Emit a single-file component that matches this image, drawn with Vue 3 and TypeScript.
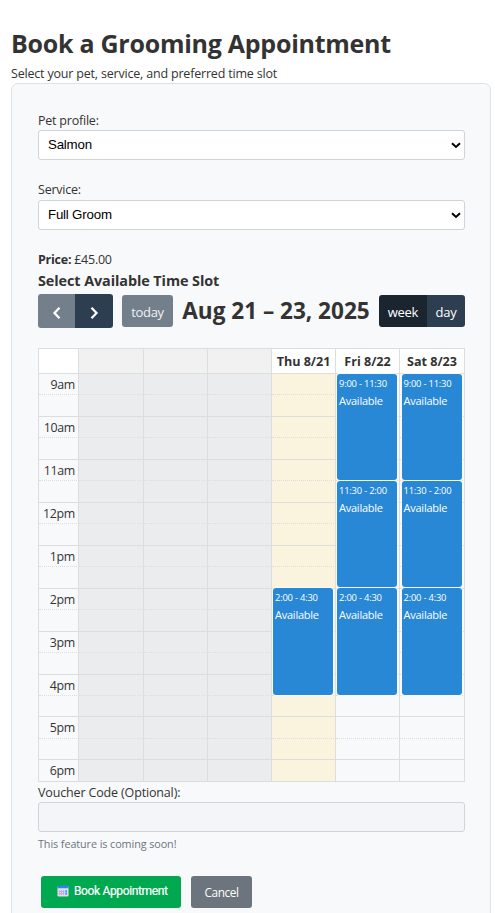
<script setup lang="ts">
import { ref } from 'vue'

interface Slot { time: string; start: number }
interface Day { label: string; kind: 'past' | 'today' | 'open'; slots: Slot[] }

const pet = ref('Salmon')
const service = ref('Full Groom')
const view = ref<'week' | 'day'>('week')

const morning: Slot = { time: '9:00 - 11:30', start: 0 }
const midday: Slot = { time: '11:30 - 2:00', start: 5 }
const afternoon: Slot = { time: '2:00 - 4:30', start: 10 }

const days: Day[] = [
  { label: '', kind: 'past', slots: [] },
  { label: '', kind: 'past', slots: [] },
  { label: '', kind: 'past', slots: [] },
  { label: 'Thu 8/21', kind: 'today', slots: [afternoon] },
  { label: 'Fri 8/22', kind: 'open', slots: [morning, midday, afternoon] },
  { label: 'Sat 8/23', kind: 'open', slots: [morning, midday, afternoon] },
]

const hours = ['9am', '10am', '11am', '12pm', '1pm', '2pm', '3pm', '4pm', '5pm', '6pm']
const rows = hours.flatMap((h) => (h === '6pm' ? [h] : [h, '']))
</script>

<template>
  <main class="page">
    <h1>Book a Grooming Appointment</h1>
    <p class="subtitle">Select your pet, service, and preferred time slot</p>
    <form class="card" @submit.prevent>
      <label class="lbl pet-lbl" for="pet">Pet profile:</label>
      <div class="select-wrap">
        <select id="pet" v-model="pet" class="field"><option>Salmon</option></select>
        <svg class="caret" viewBox="0 0 10 7"><path d="M1 1.200 5 4.900 9 1.200" /></svg>
      </div>
      <label class="lbl service-lbl" for="service">Service:</label>
      <div class="select-wrap">
        <select id="service" v-model="service" class="field"><option>Full Groom</option></select>
        <svg class="caret" viewBox="0 0 10 7"><path d="M1 1.200 5 4.900 9 1.200" /></svg>
      </div>
      <p class="price"><strong>Price:</strong> £45.00</p>
      <h3>Select Available Time Slot</h3>

      <div class="toolbar">
        <div class="left">
          <div class="group arrows">
            <button type="button" class="muted" disabled aria-label="Previous">
              <svg viewBox="0 0 10 14"><path d="M7.500 1.800 2.500 7l5 5.200" /></svg>
            </button>
            <button type="button" aria-label="Next">
              <svg viewBox="0 0 10 14"><path d="m2.500 1.800 5 5.200-5 5.200" /></svg>
            </button>
          </div>
          <div class="group today-btn"><button type="button" class="muted" disabled>today</button></div>
        </div>
        <h2>Aug 21 – 23, 2025</h2>
        <div class="group views">
          <button type="button" :class="{ active: view === 'week' }" @click="view = 'week'">week</button>
          <button type="button" :class="{ active: view === 'day' }" @click="view = 'day'">day</button>
        </div>
      </div>

      <div class="calendar">
        <div class="cols head">
          <div class="cell"></div>
          <div v-for="(d, i) in days" :key="i" class="cell" :class="d.kind"><span>{{ d.label }}</span></div>
        </div>
        <div class="body">
          <div v-for="(r, i) in rows" :key="i" class="cols row" :class="{ minor: !r }">
            <div class="cell axis">{{ r }}</div>
            <div v-for="(d, j) in days" :key="j" class="cell" :class="d.kind"></div>
          </div>
          <div class="cols events">
            <div></div>
            <div v-for="(d, i) in days" :key="i" class="lane">
              <div
                v-for="s in d.slots"
                :key="s.start"
                class="event"
                :style="{ top: `${(s.start / 19) * 100}%` }"
              >
                <div class="time">{{ s.time }}</div>
                <div class="title">Available</div>
              </div>
            </div>
          </div>
        </div>
      </div>

      <label class="lbl voucher-lbl" for="voucher">Voucher Code (Optional):</label>
      <input id="voucher" class="field voucher" disabled />
      <p class="hint">This feature is coming soon!</p>
      <div class="actions">
        <button type="submit" class="book">
          <svg class="cal" viewBox="0 0 13 13">
            <rect x="0.5" y="1" width="12" height="11.5" rx="1.5" fill="#e4dcef" />
            <path d="M.5 3.500V2.200Q.5.7 2 .7h9Q12.500.7 12.500 2.200V3.500z" fill="#2c86ec" />
            <path d="M2.500 5.500v5.500M4.800 5.500v5.500M7.100 5.500v5.500M2 7h6M2 9.300h6" stroke="#b9a9cd" stroke-width=".9" />
            <path d="M9.900 5.300v5.500" stroke="#3d9df5" stroke-width="1.600" />
          </svg>
          <span>Book Appointment</span>
        </button>
        <button type="button" class="cancel">Cancel</button>
      </div>
    </form>
  </main>
</template>

<style>
html, body { background: #fff; overflow: hidden; }
</style>

<style scoped>
* { box-sizing: border-box; }
.page {
  width: 495px;
  height: 913px;
  overflow: hidden;
  padding: 27px 4px 0 11px;
  font: 12.8px/20px "Open Sans", "Noto Sans", sans-serif;
  color: #333;
}
h1, h2, h3, p { margin: 0; white-space: nowrap; }
h1 { font-size: 25px; line-height: 32px; height: 37px; font-weight: 700; letter-spacing: -0.26px; }
.subtitle { height: 19px; font-size: 12.5px; letter-spacing: -0.19px; }
.card {
  width: 480px;
  height: 860px;
  padding: 27px 25px 0 26px;
  background: #f8f9fb;
  border: 1px solid #dee2e6;
  border-radius: 7px;
}
.lbl { display: block; height: 20px; font-size: 12.5px; letter-spacing: -0.22px; white-space: nowrap; }
.pet-lbl { height: 19px; line-height: 19px; }
.service-lbl { margin-top: 20px; }
.select-wrap { position: relative; width: 427px; height: 30px; }
.field {
  display: block;
  width: 427px;
  height: 30px;
  appearance: none;
  margin: 0;
  padding: 0 9px 1px;
  border: 1px solid #ced4da;
  border-radius: 3px;
  background: #fff;
  color: #000;
  font: 13.3px "Liberation Sans", sans-serif;
  letter-spacing: -0.2px;
}
.caret { position: absolute; right: 4px; top: 12px; width: 10px; height: 7px; fill: none; stroke: #000; stroke-width: 2; }
.price { margin-top: 20px; height: 20px; font-size: 12.5px; letter-spacing: -0.25px; }
h3 { font-size: 14.4px; line-height: 22px; height: 24px; font-weight: 700; letter-spacing: -0.08px; }
.toolbar { display: flex; justify-content: space-between; align-items: center; width: 427px; height: 34px; }
.left { display: flex; align-items: center; gap: 9px; }
.group { display: flex; height: 32px; border-radius: 3px; overflow: hidden; }
.group button {
  display: flex;
  align-items: center;
  justify-content: center;
  height: 100%;
  padding: 2px 0 0;
  border: 0;
  background: #2c3e50;
  color: #fff;
  font: 13px "Open Sans", sans-serif;
  letter-spacing: -0.3px;
}
.group button.muted { background: #737f8b; color: #f0f2f3; }
.group button.active { background: #1a252f; }
.group.arrows { height: 34px; }
.arrows button { width: 38px; }
.arrows button:first-child { width: 37px; }
.arrows svg { width: 10px; height: 14px; margin-top: 2px; fill: none; stroke: #fff; stroke-width: 2.3; }
.today-btn button { width: 51px; }
.views button:first-child { width: 48px; }
.views button:last-child { width: 38px; }
h2 { font-size: 22.6px; line-height: 34px; height: 34px; font-weight: 700; letter-spacing: -0.02px; }
.calendar { width: 427px; margin-top: 20px; border: 1px solid #ddd; border-right: 0; }
.cols { display: grid; grid-template-columns: 40px 65px 64px 64px 64px 64px 65px; }
.cell { border-right: 1px solid #ddd; }
.head { height: 24px; background: #fff; }
.head .cell { display: flex; justify-content: center; font-size: 12.6px; line-height: 25px; font-weight: 700; letter-spacing: -0.03px; white-space: nowrap; }
.head .past { background: #f1f1f1; }
.body { position: relative; }
.row { height: 22px; }
.row:nth-child(odd) { height: 21px; }
.row:nth-child(16) { height: 21px; }
.row:nth-child(17) { height: 22px; }
.row:nth-child(18) { height: 21px; }
.row:nth-child(19) { height: 22px; }
.row .cell { border-top: 1px solid #ddd; }
.row.minor .cell { border-top-style: dotted; }
.row .past { background: #ebecee; }
.row .today { background: #faf4de; }
.axis { padding-right: 3px; text-align: right; font-size: 12.4px; line-height: 21px; letter-spacing: -0.3px; }
.events { position: absolute; inset: 0; }
.lane { position: relative; }
.event {
  position: absolute;
  left: 1px;
  width: 60px;
  height: 106.4px;
  margin-top: 0.6px;
  padding: 1px 2px;
  border-radius: 3px;
  background: #2888d6;
  box-shadow: 0 0 0 1px #f8f9fb;
  color: #fff;
  white-space: nowrap;
}
.lane:last-child .event { left: 2px; }
.time { font-size: 9.4px; line-height: 17px; letter-spacing: -0.2px; }
.title { font-size: 11px; line-height: 17px; letter-spacing: -0.24px; }
.lane:last-child .time, .lane:last-child .title { margin-left: -0.5px; }
.voucher-lbl { height: 19px; margin-top: 1px; letter-spacing: -0.15px; }
.voucher { background: #f4f5f7; }
.hint { height: 20px; margin-top: 2px; font-size: 10.8px; line-height: 20px; letter-spacing: -0.08px; color: #6c757d; }
.actions { display: flex; gap: 10px; margin: 22px 0 0 3px; }
.actions button { height: 32px; padding: 0; border: 0; border-radius: 3px; color: #fff; }
.actions .book { display: flex; align-items: center; gap: 5px; width: 140px; padding: 0 0 3px 16px; background: #00a84f; font: 12px "Roboto", sans-serif; white-space: nowrap; }
.book span { letter-spacing: -0.36px; -webkit-text-stroke: 0.2px #fff; }
.cal { width: 12px; height: 12px; margin-top: 1px; }
.actions .cancel { width: 61px; padding-bottom: 1px; background: #6c757d; font: 11.8px "Open Sans", sans-serif; letter-spacing: -0.4px; }
</style>
